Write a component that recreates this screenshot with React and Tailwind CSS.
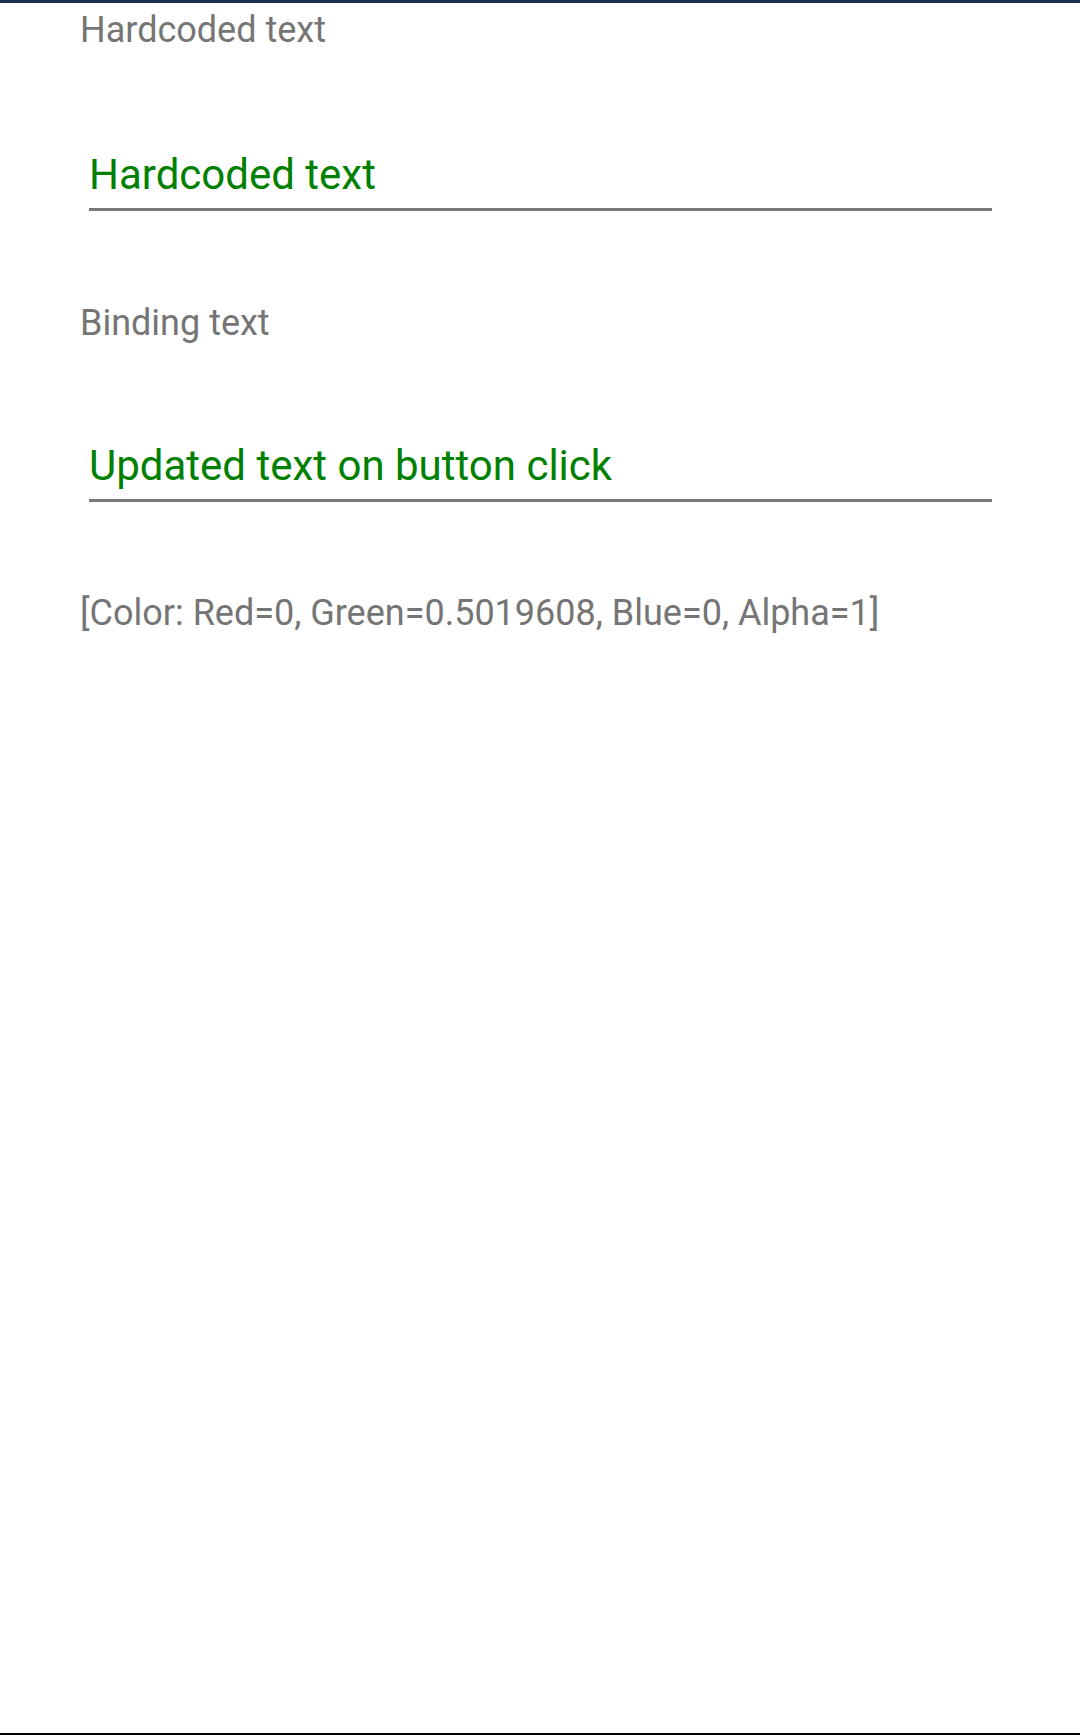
import React from 'react';

const Label = ({ children, className = '' }) => (
  <p className={`px-[80px] text-[36px] leading-[43px] text-[#757575] whitespace-nowrap ${className}`}>
    {children}
  </p>
);

const Entry = ({ value, className = '' }) => (
  <div className={`ml-[89px] w-[903px] pb-[9px] border-b-[3px] border-[#7a7a7a] ${className}`}>
    <input
      readOnly
      value={value}
      className="block w-full bg-transparent p-0 text-[42px] leading-[49px] h-[49px] text-[#008000] outline-none"
      style={{ fontFamily: 'Roboto, "Noto Sans", sans-serif' }}
    />
  </div>
);

export default function App() {
  return (
    <div className="min-h-[1735px] flex flex-col bg-white" style={{ fontFamily: 'Roboto, "Noto Sans", sans-serif' }}>
      <div className="h-[3px] bg-[#1c3451]" />
      <Label className="mt-[6px]">Hardcoded text</Label>
      <Entry value="Hardcoded text" className="mt-[98px]" />
      <Label className="mt-[91px]">Binding text</Label>
      <Entry value="Updated text on button click" className="mt-[96px]" />
      <Label className="mt-[90px]">[Color: Red=0, Green=0.5019608, Blue=0, Alpha=1]</Label>
      <div className="flex-1" />
      <div className="h-[2px] bg-black" />
    </div>
  );
}
